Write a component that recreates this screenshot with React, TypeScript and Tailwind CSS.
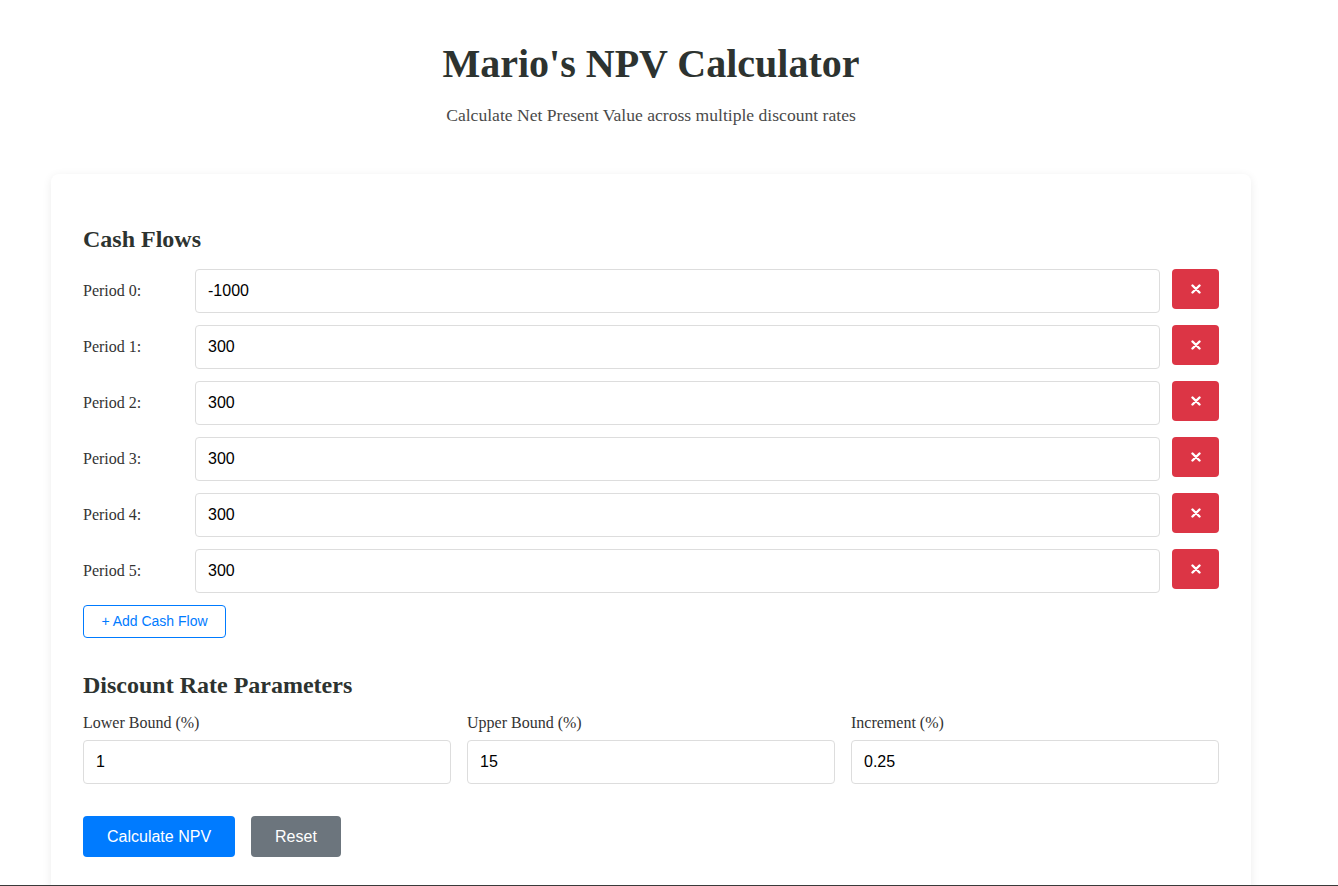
import { useState } from 'react';

const serif = 'font-["Liberation_Serif","Times_New_Roman",serif]';
const sans = 'font-["Liberation_Sans",Arial,sans-serif]';

function RemoveIcon() {
  return (
    <svg width="10" height="10" viewBox="0 0 10 10" className="block">
      <path d="M1.5 1.5 L8.5 8.5 M8.5 1.5 L1.5 8.5" stroke="white" strokeWidth="2.4" strokeLinecap="round" />
    </svg>
  );
}

export default function App() {
  const [flows, setFlows] = useState(['-1000', '300', '300', '300', '300', '300']);
  const [params, setParams] = useState({ lower: '1', upper: '15', step: '0.25' });

  const setFlow = (i: number, v: string) => setFlows(f => f.map((x, j) => (j === i ? v : x)));

  return (
    <div className="min-h-screen bg-white">
      <div className="w-[1302px] flex flex-col items-center">
        <h1 className={`${serif} mt-[41px] text-[40px] leading-[46px] font-bold text-[#2d3330]`}>Mario's NPV Calculator</h1>
        <p className={`${serif} mt-[18px] text-[17.6px] leading-[20px] text-[#4a4a4a]`}>
          Calculate Net Present Value across multiple discount rates
        </p>

        <div className="mt-[49px] w-[1200px] rounded-[8px] bg-white shadow-[0_2px_10px_rgba(0,0,0,0.08)] px-[32px] pt-[51px] pb-[40px]">
          <h2 className={`${serif} text-[24px] leading-[28px] font-bold text-[#2d3330]`}>Cash Flows</h2>

          <div className="mt-[16px] flex flex-col gap-[12px]">
            {flows.map((v, i) => (
              <div key={i} className="flex items-center gap-[12px]">
                <label className={`${serif} w-[100px] text-[16px] text-[#333]`}>Period {i}:</label>
                <input
                  value={v}
                  onChange={e => setFlow(i, e.target.value)}
                  className={`${sans} flex-1 h-[44px] px-[12px] border border-[#ddd] rounded-[4px] text-[16px] text-black outline-none`}
                />
                <button
                  onClick={() => setFlows(f => f.filter((_, j) => j !== i))}
                  className="self-start w-[47px] h-[40px] rounded-[4px] bg-[#dc3545] flex items-center justify-center"
                >
                  <RemoveIcon />
                </button>
              </div>
            ))}
          </div>

          <button
            onClick={() => setFlows(f => [...f, '0'])}
            className={`${sans} mt-[12px] h-[33px] px-[16px] w-[143px] border border-[#007bff] rounded-[4px] text-[14px] text-[#007bff] bg-white`}
          >
            + Add Cash Flow
          </button>

          <h2 className={`${serif} mt-[33px] text-[24px] leading-[28px] font-bold text-[#2d3330]`}>Discount Rate Parameters</h2>

          <div className="mt-[15px] grid grid-cols-3 gap-[16px]">
            {([
              ['lower', 'Lower Bound (%)'],
              ['upper', 'Upper Bound (%)'],
              ['step', 'Increment (%)'],
            ] as const).map(([k, label]) => (
              <div key={k} className="flex flex-col">
                <label className={`${serif} text-[16px] leading-[18px] text-[#333]`}>{label}</label>
                <input
                  value={params[k]}
                  onChange={e => setParams(p => ({ ...p, [k]: e.target.value }))}
                  className={`${sans} mt-[8px] h-[44px] px-[12px] border border-[#ddd] rounded-[4px] text-[16px] text-black outline-none`}
                />
              </div>
            ))}
          </div>

          <div className="mt-[32px] flex gap-[16px]">
            <button className={`${sans} h-[41px] px-[24px] rounded-[4px] bg-[#007bff] text-white text-[16px]`}>Calculate NPV</button>
            <button className={`${sans} h-[41px] px-[24px] rounded-[4px] bg-[#6c757d] text-white text-[16px]`}>Reset</button>
          </div>
        </div>
      </div>
      <div className="fixed left-0 right-0 bottom-0 h-[1px] bg-[#3a3a3a]" />
    </div>
  );
}
